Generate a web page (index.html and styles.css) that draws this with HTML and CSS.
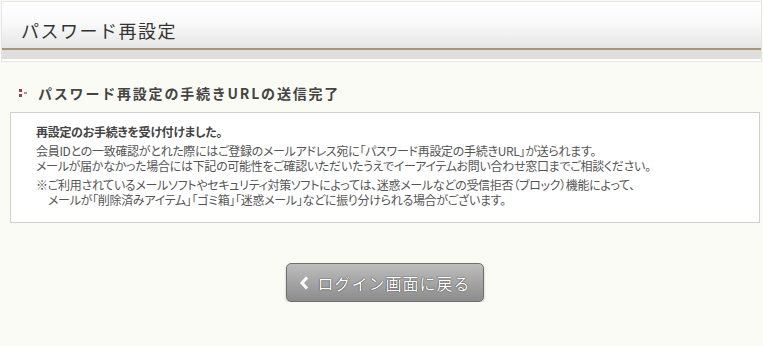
FILE: index.html
```html
<!DOCTYPE html>
<html lang="ja">
<head>
    <meta charset="UTF-8">
    <title>パスワード再設定</title>
    <link rel="stylesheet" href="styles.css">
</head>
<body>
    <!-- Page header -->
    <header class="page-header">
        <h1 class="page-title">パスワード再設定</h1>
        <div class="header-rule"></div>
    </header>

    <main class="content">
        <h2 class="section-title">
            <svg class="section-mark" width="10" height="9" viewBox="0 0 10 9">
                <rect x="0" y="1" width="3" height="3" fill="#9c3f52"/>
                <rect x="0" y="6" width="3" height="3" fill="#9c3f52"/>
                <rect x="5" y="4" width="3" height="2" fill="#c78a95"/>
            </svg>
            パスワード再設定の手続きURLの送信完了
        </h2>

        <div class="notice-box">
            <p class="notice-lead">再設定のお手続きを受け付けました。</p>
            <p class="notice-text">
                会員IDとの一致確認がとれた際にはご登録のメールアドレス宛に「パスワード再設定の手続きURL」が送られます。<br>
                メールが届かなかった場合には下記の可能性をご確認いただいたうえでイーアイテムお問い合わせ窓口までご相談ください。
            </p>
            <p class="notice-text">
                ※ご利用されているメールソフトやセキュリティ対策ソフトによっては、迷惑メールなどの受信拒否（ブロック）機能によって、<br>
                <span class="indent">メールが「削除済みアイテム」「ゴミ箱」「迷惑メール」などに振り分けられる場合がございます。</span>
            </p>
        </div>

        <div class="actions">
            <a href="#" class="back-btn">
                <svg class="back-icon" width="10" height="14" viewBox="0 0 10 14">
                    <path d="M8 1.5 L3 7 L8 12.5" fill="none" stroke="#fff" stroke-width="3"/>
                </svg>
                ログイン画面に戻る
            </a>
        </div>
    </main>
</body>
</html>
```

FILE: styles.css
```css
/* General styles */
body {
    margin: 0;
    padding: 0;
    background: #fbfbf6;
    color: #444;
    font-family: "Noto Sans CJK JP", "Noto Sans", sans-serif;
}

/* Header */
.page-header {
    margin: 1px 1px 0;
    border: 1px solid #e4e4e4;
    background: #fff;
}

.page-title {
    margin: 0;
    height: 46px;
    padding-left: 19px;
    font-size: 18px;
    font-weight: normal;
    letter-spacing: 1.5px;
    line-height: 58px;
    color: #333;
    background: linear-gradient(#ffffff 0%, #fafafa 45%, #e6e6e6 100%);
    overflow: hidden;
    box-sizing: border-box;
    line-height: 56px;
}

.header-rule {
    height: 9px;
    border-top: 2px solid #a8967a;
    border-bottom: 2px solid #fff;
    background: #dedede;
}

/* Content */
.content {
    margin: 0 3px 0 10px;
}

.section-title {
    display: flex;
    align-items: center;
    margin: 0;
    padding: 21px 0 0 9px;
    height: 19px;
    font-size: 14px;
    font-weight: bold;
    letter-spacing: 1.8px;
    color: #444;
}

.section-mark {
    margin-right: 9px;
}

.notice-box {
    margin-top: 10px;
    padding: 11px 25px 15px;
    background: #fff;
    border: 1px solid #cfcfcf;
    font-size: 12px;
    line-height: 15px;
    letter-spacing: -0.3px;
    font-feature-settings: "palt";
}

.notice-box p {
    margin: 0;
}

.notice-lead {
    font-weight: bold;
    color: #444;
    margin-bottom: 4px !important;
}

.notice-text {
    color: #555;
    margin-bottom: 4px !important;
}

.notice-text:last-child {
    margin-bottom: 0 !important;
}

.indent {
    padding-left: 12px;
}

/* Back button */
.actions {
    display: flex;
    justify-content: center;
    padding-top: 40px;
}

.back-btn {
    display: flex;
    align-items: center;
    justify-content: center;
    gap: 8px;
    width: 198px;
    height: 39px;
    box-sizing: border-box;
    border: 1px solid #6e6e6e;
    border-radius: 5px;
    background: linear-gradient(#bdbdbd, #8c8c8c);
    box-shadow: 0 2px 3px rgba(0, 0, 0, 0.2);
    color: #fff;
    font-size: 16px;
    letter-spacing: 1px;
    text-decoration: none;
    text-shadow: 0 0 1px #333, 0 0 1px #333;
}
```
